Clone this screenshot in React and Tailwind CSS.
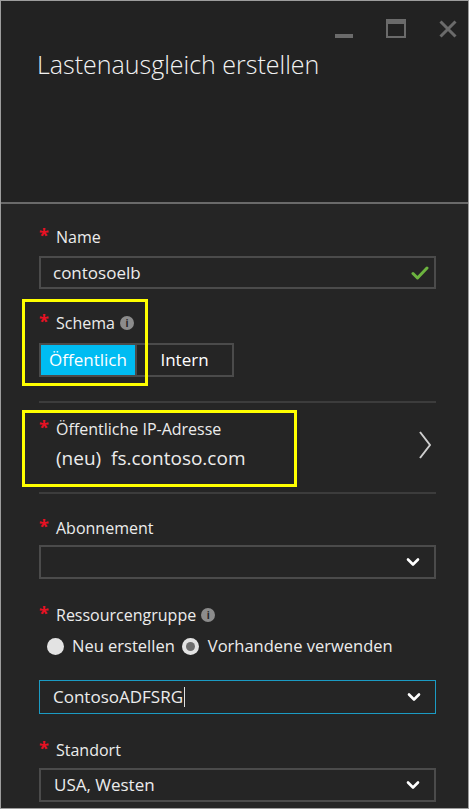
const font = { fontFamily: '"Open Sans", "Noto Sans", sans-serif' }

function Star() {
  return <span className="w-[17px] shrink-0 self-start text-[18px] leading-[18px] font-bold text-[#e81123]">*</span>
}

function Info() {
  return (
    <span className="ml-[5px] flex h-[14px] w-[14px] items-center justify-center rounded-full bg-[#8c8c8c] text-[10px] font-bold leading-none text-[#252525]">
      i
    </span>
  )
}

function Label({ children, info }) {
  return (
    <div className="flex h-[22px] items-center text-[16px] leading-[22px] text-[#ececec]">
      <Star />
      <span>{children}</span>
      {info && <Info />}
    </div>
  )
}

function ChevronDown() {
  return (
    <svg viewBox="0 0 14 10" className="h-[10px] w-[14px]" fill="none" stroke="#fff" strokeWidth="2.6" strokeLinecap="round" strokeLinejoin="round">
      <path d="M2 2.5l5 5 5-5" />
    </svg>
  )
}

function Dropdown({ value, active }) {
  return (
    <div
      className={`flex h-[34px] items-center justify-between pl-[13px] pr-[14px] text-[17px] text-[#ececec] ${
        active ? 'border border-[#1b9bc4]' : 'border-2 border-[#4b4b4b]'
      }`}
    >
      <span className="flex items-center">
        {value}
        {active && <span className="ml-[1px] h-[20px] w-[1px] bg-[#e0e0e0]" />}
      </span>
      <ChevronDown />
    </div>
  )
}

export default function App() {
  return (
    <div style={font} className="flex h-[809px] w-[469px] flex-col border border-[#9d9d9d] bg-[#252525]">
      {/* header */}
      <div className="h-[203px] shrink-0 border-b-2 border-[#6a6a6a] bg-[#222222]">
        <div className="flex items-start justify-end pt-[18px] pr-[11px]">
          <div className="mt-[15px] h-[4px] w-[18px] bg-[#6b6b6b]" />
          <div className="ml-[33px] h-[19px] w-[20px] border-2 border-t-[5px] border-[#6b6b6b]" />
          <svg viewBox="0 0 18 18" className="ml-[33px] mt-[1px] h-[18px] w-[18px]" stroke="#6b6b6b" strokeWidth="3">
            <path d="M1.5 1.5l15 15M16.5 1.5l-15 15" />
          </svg>
        </div>
        <h1 className="ml-[36px] mt-[9px] text-[25px] font-light leading-[34px] text-[#f2f2f2]">Lastenausgleich erstellen</h1>
      </div>

      {/* body */}
      <div className="flex flex-col pl-[38px] pr-[32px] pt-[22px]">
        <Label>Name</Label>
        <div className="mt-[8px] flex h-[33px] items-center justify-between border-2 border-[#4b4b4b] pl-[12px] pr-[5px] text-[17px] text-[#ececec]">
          <span>contosoelb</span>
          <svg viewBox="0 0 18 14" className="h-[14px] w-[18px]" fill="none" stroke="#6cb33f" strokeWidth="3" strokeLinecap="round" strokeLinejoin="round">
            <path d="M2 7.5l4.5 4.5L16 2" />
          </svg>
        </div>

        <div className="relative mt-[23px]">
          <div className="absolute -left-[17px] -top-[13px] h-[87px] w-[126px] border-[3px] border-[#ffff00]" />
          <Label info>Schema</Label>
          <div className="mt-[9px] flex h-[34px] text-[17px] text-white">
            <div className="flex w-[98px] items-center justify-center border-2 border-[#4b4b4b] bg-[#00bcf2]">Öffentlich</div>
            <div className="flex w-[97px] items-center justify-center border-2 border-l-0 border-[#4b4b4b]">Intern</div>
          </div>
        </div>

        <div className="mt-[24px] h-[2px] bg-[#3c3c3c]" />

        <div className="relative mt-[15px] flex items-center justify-between">
          <div className="absolute -left-[17px] -top-[8px] h-[77px] w-[275px] border-[3px] border-[#ffff00]" />
          <div>
            <Label>Öffentliche IP-Adresse</Label>
            <div className="ml-[17px] mt-[5px] text-[19px] leading-[26px] text-[#ececec]">
              (neu)&nbsp; fs.contoso.com
            </div>
          </div>
          <svg viewBox="0 0 12 28" className="mr-[5px] h-[28px] w-[12px]" fill="none" stroke="#cfcfcf" strokeWidth="2">
            <path d="M1 1l10 13L1 27" />
          </svg>
        </div>

        <div className="mt-[21px] h-[2px] bg-[#3c3c3c]" />

        <div className="mt-[23px]">
          <Label>Abonnement</Label>
        </div>
        <div className="mt-[6px]">
          <Dropdown value="" />
        </div>

        <div className="mt-[25px]">
          <Label info>Ressourcengruppe</Label>
        </div>
        <div className="mt-[9px] flex h-[22px] items-center pl-[8px] text-[16.5px] text-[#ececec]">
          <span className="h-[17px] w-[17px] rounded-full bg-[#e3e3e3]" />
          <span className="ml-[8px]">Neu erstellen</span>
          <span className="ml-[7px] flex h-[17px] w-[17px] items-center justify-center rounded-full bg-[#e3e3e3]">
            <span className="h-[9px] w-[9px] rounded-full bg-[#6e6e6e]" />
          </span>
          <span className="ml-[9px]">Vorhandene verwenden</span>
        </div>
        <div className="mt-[23px]">
          <Dropdown value="ContosoADFSRG" active />
        </div>

        <div className="mt-[25px]">
          <Label>Standort</Label>
        </div>
        <div className="mt-[7px]">
          <Dropdown value="USA, Westen" />
        </div>
      </div>
    </div>
  )
}
